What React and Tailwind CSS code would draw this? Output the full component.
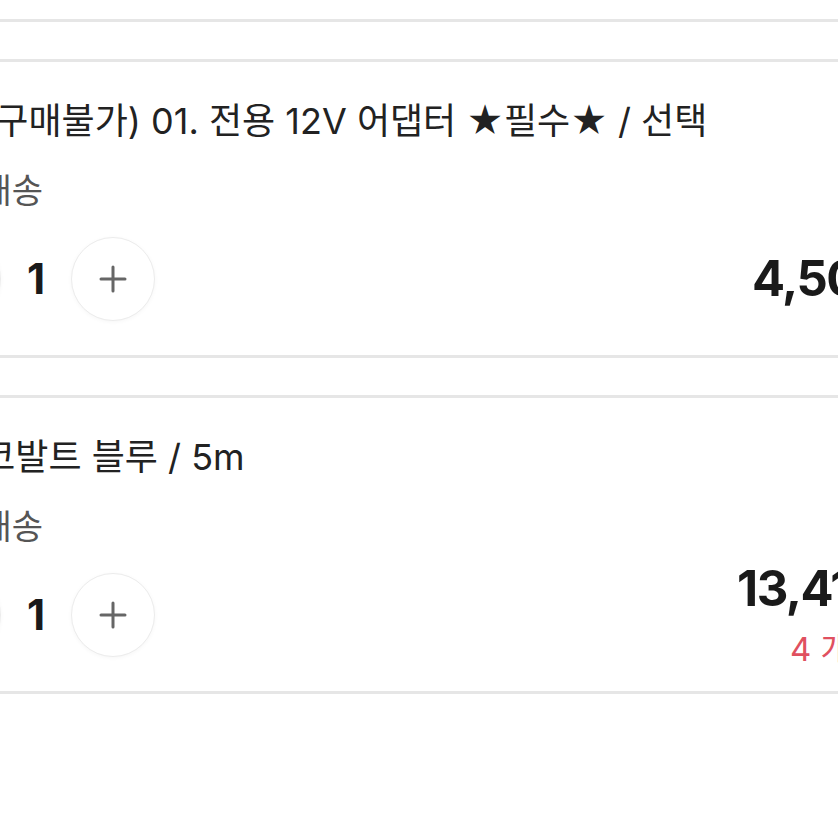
import React from 'react';

const font = "font-['Inter','Noto_Sans_CJK_KR',sans-serif]";

const items = [
  {
    id: 1,
    title: '단독(구매불가) 01. 전용 12V 어댑터 ★필수★ / 선택',
    shipping: '무료배송',
    qty: 1,
    price: '4,500원',
    priceBox: 'w-[265px]',
    note: null,
  },
  {
    id: 2,
    title: '로얄코발트 블루 / 5m',
    shipping: '무료배송',
    qty: 1,
    price: '13,410원',
    priceBox: 'w-[280px]',
    note: '4 개 남음',
  },
];

const RoundButton = ({ children, label }) => (
  <button
    aria-label={label}
    className="w-[84px] h-[84px] shrink-0 rounded-full border border-[#ececec] bg-white shadow-[0_1px_4px_rgba(0,0,0,0.04)] flex items-center justify-center text-[#666]"
  >
    {children}
  </button>
);

const CartItem = ({ item }) => (
  <div className="border-y-[3px] border-[#e6e6e6] pt-[35px] pb-[34px]">
    <p className="ml-[-1px] text-[36px] leading-[48px] text-[#222] whitespace-nowrap">{item.title}</p>
    <p className="mt-[24px] ml-[1px] text-[34px] leading-[44px] text-[#555]">{item.shipping}</p>
    <div className="mt-[24px] h-[84px] flex items-center">
      <RoundButton label="minus">
        <svg width="28" height="28" viewBox="0 0 28 28">
          <path d="M2 14h24" stroke="currentColor" strokeWidth="3" strokeLinecap="round" />
        </svg>
      </RoundButton>
      <span className="w-[70px] text-center text-[42px] leading-none font-bold text-[#1a1a1a]">{item.qty}</span>
      <RoundButton label="plus">
        <svg width="28" height="28" viewBox="0 0 28 28">
          <path d="M14 2v24M2 14h24" stroke="currentColor" strokeWidth="3" strokeLinecap="round" />
        </svg>
      </RoundButton>
      <div className={`ml-auto ${item.priceBox} flex flex-col`}>
        <span className="text-[49px] leading-[56px] font-bold tracking-[-1.5px] text-[#1a1a1a] whitespace-nowrap">{item.price}</span>
        {item.note && (
          <span className="mt-[12px] pl-[53px] text-[33px] leading-[40px] text-[#e0505f] whitespace-nowrap">{item.note}</span>
        )}
      </div>
    </div>
  </div>
);

export default function App() {
  return (
    <div className={`w-[838px] h-[838px] overflow-hidden bg-white ${font}`}>
      <div className="ml-[-83px] w-[1100px]">
        <div className="h-[22px] border-b-[3px] border-[#e6e6e6]" />
        <div className="h-[37px]" />
        <CartItem item={items[0]} />
        <div className="h-[37px]" />
        <CartItem item={items[1]} />
      </div>
    </div>
  );
}
